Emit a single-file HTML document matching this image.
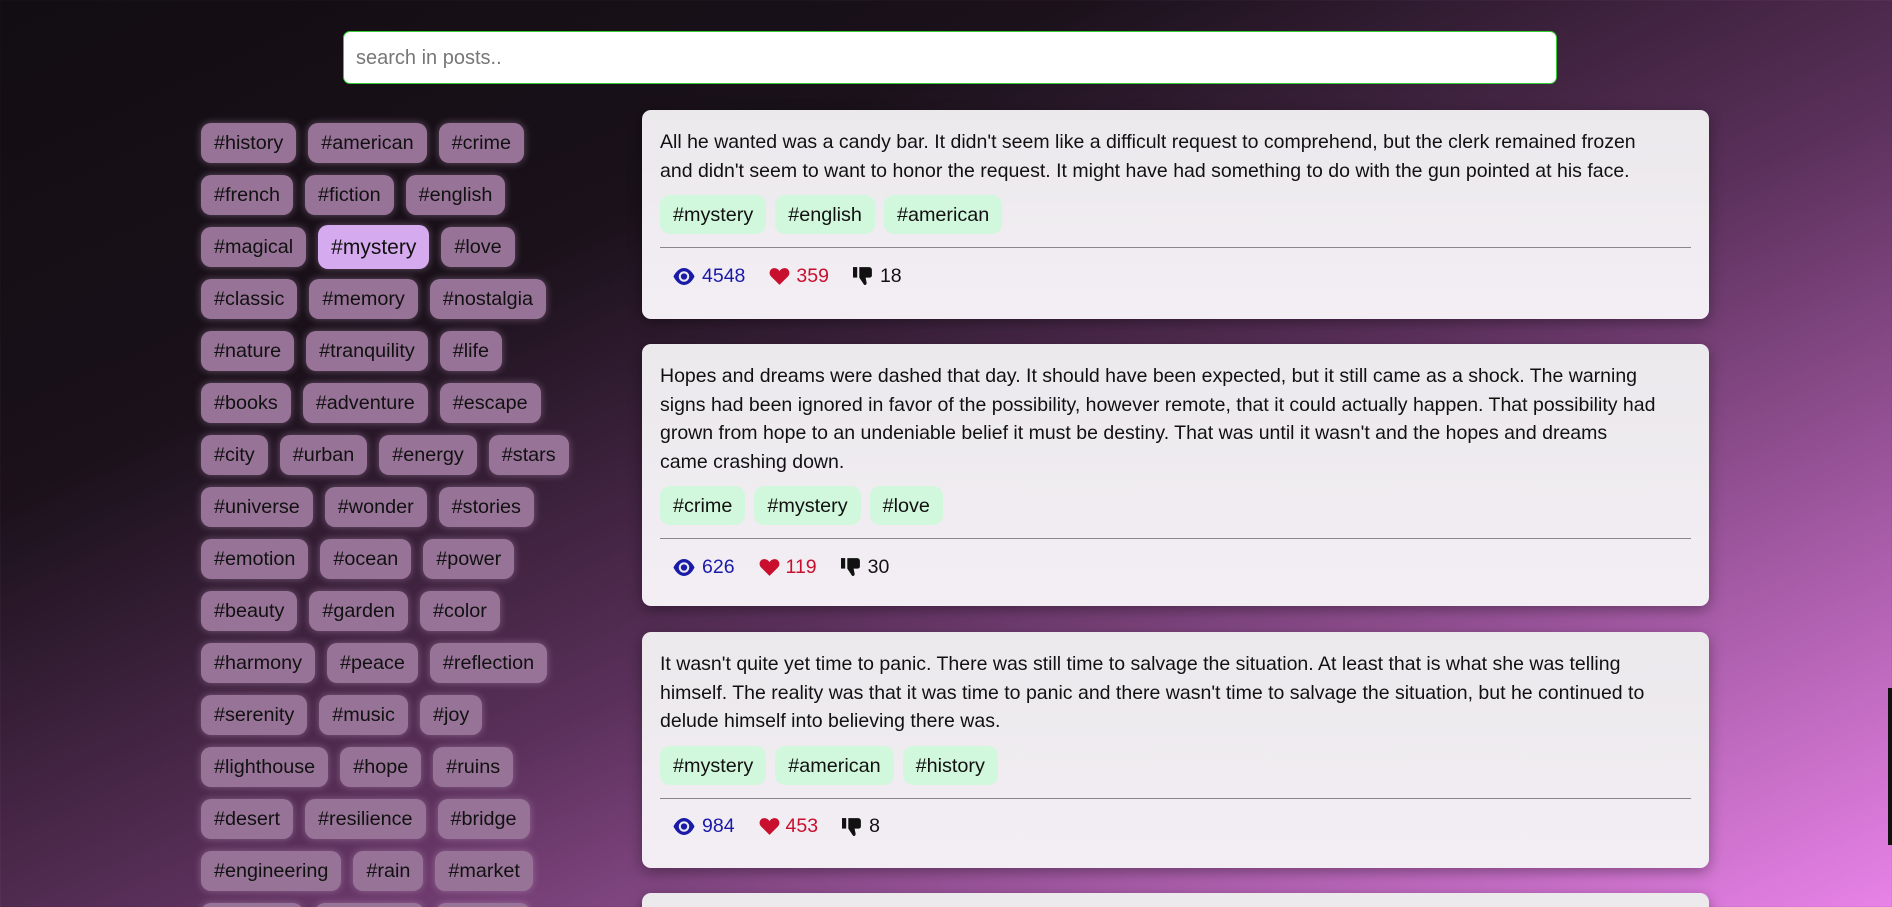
<!DOCTYPE html>
<html><head><meta charset="utf-8"><style>
*{box-sizing:border-box;margin:0;padding:0}
html,body{width:1892px;height:907px;overflow:hidden}
body{font-family:"Liberation Sans",sans-serif;background:linear-gradient(155deg,#120d12 0%,#1a111a 28%,#5a305a 55%,#a45aa4 78%,#e882e8 100%);position:relative}
.search{position:absolute;left:343px;top:31px;width:1214px;height:53px;background:#fff;border:1px solid #3c3;border-radius:7px;font-size:20px;color:#777;padding:15px 12px}
.tags{position:absolute;left:201px;top:123px}
.row{display:flex;gap:12px;margin-bottom:12px;height:40px}
.t{height:40px;line-height:41px;padding:0 13px;background:#977397;border-radius:10px;font-size:19.8px;color:#111;box-shadow:0 0 8px rgba(200,160,200,.45)}
.t.sel{background:#d6aaee;height:44px;line-height:45px;margin-top:-2px;font-size:21px}
.card{position:absolute;left:642px;width:1067px;background:linear-gradient(180deg,#ebe9ec,#f3eef4);border-radius:9px;padding:18px 18px;box-shadow:0 4px 14px rgba(0,0,0,.35)}
.card p{font-size:19.5px;line-height:28.5px;color:#111;white-space:nowrap}
.pt{display:flex;gap:9px;margin-top:10px}
.pt span{background:#d1f8dc;border-radius:10px;height:39px;line-height:40px;padding:0 13px;font-size:19.8px;color:#111}
.card hr{border:0;border-top:1px solid #888;margin-top:13px}
.st{display:flex;align-items:center;height:56px;padding-left:12px;font-size:19.5px}
.st .v{color:#1a1aa8;display:flex;align-items:center;gap:6px;margin-right:24px}
.st .h{color:#c8102e;display:flex;align-items:center;gap:6px;margin-right:24px}
.st .d{color:#111;display:flex;align-items:center;gap:6px}
.sb{position:absolute;left:1888px;top:688px;width:4px;height:157px;background:#111}
</style></head><body>
<div class="search">search in posts..</div>
<div class="tags">
<div class="row"><span class="t">#history</span><span class="t">#american</span><span class="t">#crime</span></div>
<div class="row"><span class="t">#french</span><span class="t">#fiction</span><span class="t">#english</span></div>
<div class="row"><span class="t">#magical</span><span class="t sel">#mystery</span><span class="t">#love</span></div>
<div class="row"><span class="t">#classic</span><span class="t">#memory</span><span class="t">#nostalgia</span></div>
<div class="row"><span class="t">#nature</span><span class="t">#tranquility</span><span class="t">#life</span></div>
<div class="row"><span class="t">#books</span><span class="t">#adventure</span><span class="t">#escape</span></div>
<div class="row"><span class="t">#city</span><span class="t">#urban</span><span class="t">#energy</span><span class="t">#stars</span></div>
<div class="row"><span class="t">#universe</span><span class="t">#wonder</span><span class="t">#stories</span></div>
<div class="row"><span class="t">#emotion</span><span class="t">#ocean</span><span class="t">#power</span></div>
<div class="row"><span class="t">#beauty</span><span class="t">#garden</span><span class="t">#color</span></div>
<div class="row"><span class="t">#harmony</span><span class="t">#peace</span><span class="t">#reflection</span></div>
<div class="row"><span class="t">#serenity</span><span class="t">#music</span><span class="t">#joy</span></div>
<div class="row"><span class="t">#lighthouse</span><span class="t">#hope</span><span class="t">#ruins</span></div>
<div class="row"><span class="t">#desert</span><span class="t">#resilience</span><span class="t">#bridge</span></div>
<div class="row"><span class="t">#engineering</span><span class="t">#rain</span><span class="t">#market</span></div>
<div class="row"><span class="t">#journey</span><span class="t">#freedom</span><span class="t">#dream</span></div>
</div>

<div class="card" style="top:110px;height:209px">
<p>All he wanted was a candy bar. It didn't seem like a difficult request to comprehend, but the clerk remained frozen<br>and didn't seem to want to honor the request. It might have had something to do with the gun pointed at his face.</p>
<div class="pt"><span>#mystery</span><span>#english</span><span>#american</span></div>
<hr>
<div class="st"><span class="v"><svg width="24" height="19" viewBox="0 0 22 18"><path d="M1 9C4 3 8 1 11 1s7 2 10 8c-3 6-7 8-10 8S4 15 1 9z" fill="#1a1aa8"/><circle cx="11" cy="9" r="5" fill="#eceaee"/><circle cx="11" cy="9" r="3" fill="#1a1aa8"/></svg>4548</span><span class="h"><svg width="21" height="19" viewBox="0 0 20 18"><path d="M10 17L2 9C-1 6 1 1 5 1c2 0 4 1 5 3 1-2 3-3 5-3 4 0 6 5 3 8z" fill="#c8102e"/></svg>359</span><span class="d"><svg width="21" height="20" viewBox="0 0 20 19"><rect x="0" y="1" width="4" height="10" fill="#111"/><path d="M6 1h9c2 0 3 1 3 3v5c0 1-1 2-2 2h-4l1 5c0 2-2 3-3 1L6 11z" fill="#111"/></svg>18</span></div>
</div>

<div class="card" style="top:344px;height:262px">
<p>Hopes and dreams were dashed that day. It should have been expected, but it still came as a shock. The warning<br>signs had been ignored in favor of the possibility, however remote, that it could actually happen. That possibility had<br>grown from hope to an undeniable belief it must be destiny. That was until it wasn't and the hopes and dreams<br>came crashing down.</p>
<div class="pt"><span>#crime</span><span>#mystery</span><span>#love</span></div>
<hr>
<div class="st"><span class="v"><svg width="24" height="19" viewBox="0 0 22 18"><path d="M1 9C4 3 8 1 11 1s7 2 10 8c-3 6-7 8-10 8S4 15 1 9z" fill="#1a1aa8"/><circle cx="11" cy="9" r="5" fill="#eceaee"/><circle cx="11" cy="9" r="3" fill="#1a1aa8"/></svg>626</span><span class="h"><svg width="21" height="19" viewBox="0 0 20 18"><path d="M10 17L2 9C-1 6 1 1 5 1c2 0 4 1 5 3 1-2 3-3 5-3 4 0 6 5 3 8z" fill="#c8102e"/></svg>119</span><span class="d"><svg width="21" height="20" viewBox="0 0 20 19"><rect x="0" y="1" width="4" height="10" fill="#111"/><path d="M6 1h9c2 0 3 1 3 3v5c0 1-1 2-2 2h-4l1 5c0 2-2 3-3 1L6 11z" fill="#111"/></svg>30</span></div>
</div>

<div class="card" style="top:632px;height:236px">
<p>It wasn't quite yet time to panic. There was still time to salvage the situation. At least that is what she was telling<br>himself. The reality was that it was time to panic and there wasn't time to salvage the situation, but he continued to<br>delude himself into believing there was.</p>
<div class="pt"><span>#mystery</span><span>#american</span><span>#history</span></div>
<hr>
<div class="st"><span class="v"><svg width="24" height="19" viewBox="0 0 22 18"><path d="M1 9C4 3 8 1 11 1s7 2 10 8c-3 6-7 8-10 8S4 15 1 9z" fill="#1a1aa8"/><circle cx="11" cy="9" r="5" fill="#eceaee"/><circle cx="11" cy="9" r="3" fill="#1a1aa8"/></svg>984</span><span class="h"><svg width="21" height="19" viewBox="0 0 20 18"><path d="M10 17L2 9C-1 6 1 1 5 1c2 0 4 1 5 3 1-2 3-3 5-3 4 0 6 5 3 8z" fill="#c8102e"/></svg>453</span><span class="d"><svg width="21" height="20" viewBox="0 0 20 19"><rect x="0" y="1" width="4" height="10" fill="#111"/><path d="M6 1h9c2 0 3 1 3 3v5c0 1-1 2-2 2h-4l1 5c0 2-2 3-3 1L6 11z" fill="#111"/></svg>8</span></div>
</div>

<div class="card" style="top:893px;height:100px"></div>
<div class="sb"></div>
</body></html>
